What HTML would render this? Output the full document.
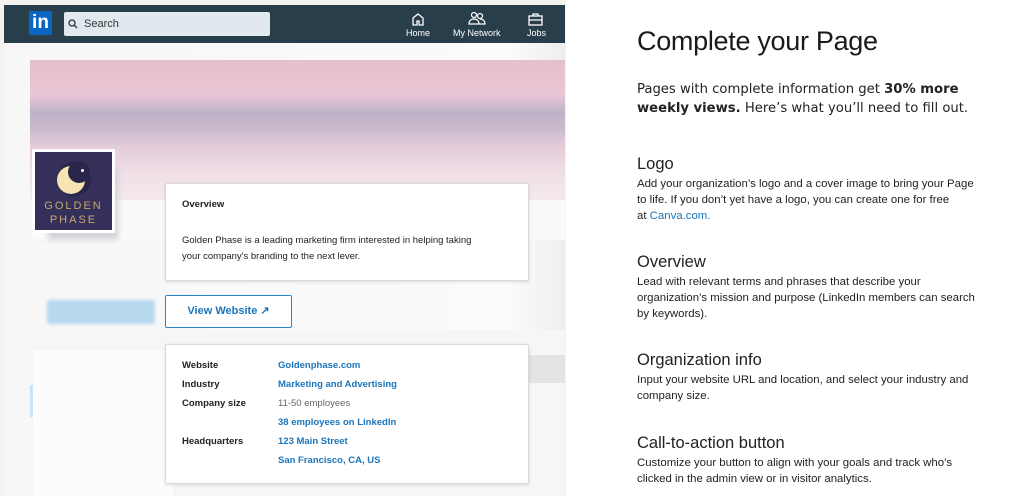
<!DOCTYPE html>
<html><head><style>
*{margin:0;padding:0;box-sizing:border-box}
body{width:1024px;height:496px;background:#fff;font-family:"Liberation Sans",sans-serif;position:relative;overflow:hidden}
.abs{position:absolute}
#left{left:0;top:0;width:566px;height:496px;background:#f4f3f0}
.nav{left:4px;top:5px;width:561px;height:38px;background:#283e4a}
.card{background:#fff;border:1px solid #d9d9d9;border-radius:2px;box-shadow:0 1px 3px rgba(0,0,0,.12)}
h2{font-weight:normal;font-size:16.5px;color:#222;font-family:"Liberation Sans",sans-serif}
.p{font-size:11.4px;line-height:16px;color:#222;font-family:"Liberation Sans",sans-serif}
.lbl{font-size:9.5px;font-weight:bold;color:#222}
.val{font-size:9.5px;font-weight:bold;color:#1b75bb}
</style></head><body>
<div id="left" class="abs"></div>
<div class="abs" style="left:4px;top:43px;width:561px;height:453px;background:linear-gradient(90deg,#f7f7f7,#fbfbfb 90%,#eee)"></div>
<div class="abs nav"></div>
<div class="abs" style="left:29px;top:11px;width:23px;height:24px;background:#0a66c2;border-radius:2px;color:#fff;font-weight:bold;font-size:19px;line-height:24px;text-align:center">in</div>
<div class="abs" style="left:64px;top:12px;width:206px;height:24px;background:#e1e9ee;border-radius:2px;font-size:11px;color:#333;line-height:24px;padding-left:20px">Search</div>
<svg class="abs" style="left:68px;top:19px" width="10" height="10"><circle cx="4" cy="4" r="3" fill="none" stroke="#333" stroke-width="1.3"/><path d="M6 6l3 3" stroke="#333" stroke-width="1.3"/></svg>
<svg class="abs" style="left:411px;top:12px" width="14" height="14"><path d="M2 6L7 2l5 4v7H8V9H6v4H2z" fill="none" stroke="#fff" stroke-width="1.3"/></svg>
<div class="abs" style="left:406px;top:28px;font-size:9px;color:#fff">Home</div>
<svg class="abs" style="left:468px;top:11px" width="18" height="15"><circle cx="6" cy="4" r="2.5" fill="none" stroke="#fff" stroke-width="1.2"/><circle cx="12" cy="5" r="2.5" fill="none" stroke="#fff" stroke-width="1.2"/><path d="M1 13c0-4 3-5 5-5s5 1 5 5zM9 13h8c0-3-2-5-5-5" fill="none" stroke="#fff" stroke-width="1.2"/></svg>
<div class="abs" style="left:453px;top:28px;font-size:9px;color:#fff">My Network</div>
<svg class="abs" style="left:528px;top:12px" width="15" height="14"><rect x="1" y="4" width="13" height="9" fill="none" stroke="#fff" stroke-width="1.3"/><path d="M5 4V2h5v2M1 8h13" fill="none" stroke="#fff" stroke-width="1.3"/></svg>
<div class="abs" style="left:527px;top:28px;font-size:9px;color:#fff">Jobs</div>
<div class="abs" style="left:30px;top:60px;width:535px;height:140px;background:linear-gradient(180deg,#e5bfcd 0%,#e9c6d4 25%,#bdb1c8 38%,#c9b8cc 48%,#e3ccd8 62%,#efdee6 80%,#f4e9ee 100%)"></div>
<div class="abs" style="left:33px;top:200px;width:532px;height:40px;background:#fafafa"></div>
<div class="abs" style="left:48px;top:168px;width:70px;height:72px;background:#d4d2da;filter:blur(3px)"></div>
<div class="abs" style="left:32px;top:149px;width:83px;height:84px;background:#fff;padding:3px"><div style="width:77px;height:78px;background:#34305a;position:relative">
<div style="position:absolute;left:22px;top:10px;width:34px;height:34px;border-radius:50%;background:#2a2649"></div>
<div style="position:absolute;left:22px;top:14px;width:28px;height:28px;border-radius:50%;background:#f6e4b3"></div>
<div style="position:absolute;left:33px;top:9px;width:22px;height:22px;border-radius:50%;background:#2a2649"></div>
<div style="position:absolute;left:46px;top:17px;width:3px;height:3px;border-radius:50%;background:#fff"></div>
<div style="position:absolute;left:0;top:47px;width:77px;text-align:center;color:#c6a86c;font-size:11px;letter-spacing:2px;line-height:14px">GOLDEN<br>PHASE</div></div></div>
<div class="abs" style="left:47px;top:300px;width:108px;height:24px;background:#b8d8ee;border-radius:2px;filter:blur(1.5px)"></div>
<div class="abs" style="left:33px;top:330px;width:532px;height:166px;background:#f6f6f6"></div>
<div class="abs" style="left:33px;top:350px;width:140px;height:146px;background:#fcfcfc"></div>
<div class="abs" style="left:30px;top:385px;width:3px;height:32px;background:#cde3f3"></div>
<div class="abs" style="left:185px;top:355px;width:380px;height:28px;background:#e4e4e6"></div>
<div class="abs card" style="left:165px;top:183px;width:364px;height:98px"></div>
<div class="abs" style="left:182px;top:199px;font-size:9.5px;font-weight:bold;color:#222">Overview</div>
<div class="abs" style="left:182px;top:233px;font-size:9.5px;line-height:16px;color:#222">Golden Phase is a leading marketing firm interested in helping taking<br>your company's branding to the next lever.</div>
<div class="abs" style="left:165px;top:295px;width:127px;height:33px;border:1.5px solid #2a83c6;border-radius:2px;background:#fff;color:#1b75bb;font-weight:bold;font-size:11px;line-height:30px;text-align:center">View Website ↗</div>
<div class="abs card" style="left:165px;top:344px;width:364px;height:140px"></div>
<div class="abs lbl" style="left:182px;top:360px">Website</div><div class="abs val" style="left:278px;top:360px">Goldenphase.com</div>
<div class="abs lbl" style="left:182px;top:379px">Industry</div><div class="abs val" style="left:278px;top:379px">Marketing and Advertising</div>
<div class="abs lbl" style="left:182px;top:398px">Company size</div><div class="abs" style="left:278px;top:398px;font-size:9.5px;color:#666">11-50 employees</div>
<div class="abs val" style="left:278px;top:417px">38 employees on LinkedIn</div>
<div class="abs lbl" style="left:182px;top:436px">Headquarters</div><div class="abs val" style="left:278px;top:436px">123 Main Street</div>
<div class="abs val" style="left:278px;top:455px">San Francisco, CA, US</div>

<div class="abs" style="left:637px;top:26px;font-size:27px;font-weight:300;color:#1a1a1a;letter-spacing:-0.3px">Complete your Page</div>
<div class="abs" style="left:637px;top:80px;width:345px;font-size:13.2px;line-height:19px;color:#222;font-family:'DejaVu Sans',sans-serif">Pages with complete information get <b>30% more weekly views.</b> Here’s what you’ll need to fill out.</div>
<div class="abs" style="left:637px;top:155px;width:343px"><h2>Logo</h2><div class="p" style="margin-top:2px">Add your organization’s logo and a cover image to bring your Page to life. If you don’t yet have a logo, you can create one for free<br>at <span style="color:#1b75bb">Canva.com.</span></div></div>
<div class="abs" style="left:637px;top:253px;width:343px"><h2>Overview</h2><div class="p" style="margin-top:2px">Lead with relevant terms and phrases that describe your organization’s mission and purpose (LinkedIn members can search by keywords).</div></div>
<div class="abs" style="left:637px;top:351px;width:343px"><h2>Organization info</h2><div class="p" style="margin-top:2px">Input your website URL and location, and select your industry and company size.</div></div>
<div class="abs" style="left:637px;top:434px;width:343px"><h2>Call-to-action button</h2><div class="p" style="margin-top:2px">Customize your button to align with your goals and track who’s clicked in the admin view or in visitor analytics.</div></div>
</body></html>
